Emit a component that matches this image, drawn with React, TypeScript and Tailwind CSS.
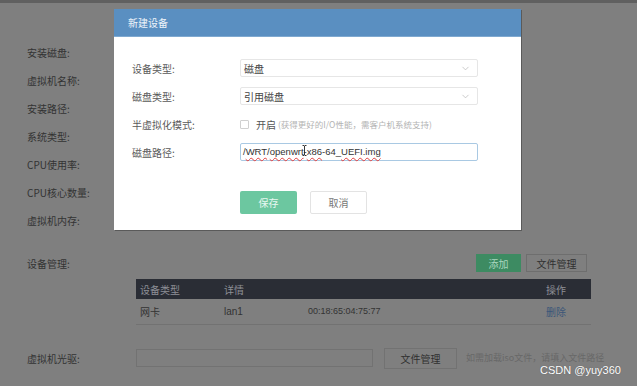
import React from 'react';
import { ChevronDown } from 'lucide-react';

const font = { fontFamily: '"Microsoft YaHei", "Noto Sans CJK SC", "Liberation Sans", sans-serif' };

const BgLabels = ['安装磁盘:', '虚拟机名称:', '安装路径:', '系统类型:', 'CPU使用率:', 'CPU核心数量:', '虚拟机内存:'];

const Select = ({ value }: { value: string }) => (
  <div className="flex h-[18px] w-[238px] items-center justify-between rounded-[2px] border border-[#e6e6e6] bg-white pl-[3px] pr-[6px]">
    <span className="text-[10px] text-[#444]">{value}</span>
    <ChevronDown className="h-[11px] w-[11px] text-[#b5b5b5]" strokeWidth={1.5} />
  </div>
);

const Squiggle = ({ children }: { children: React.ReactNode }) => (
  <span className="underline decoration-wavy decoration-[#e04040] decoration-[1px] underline-offset-[2px]">{children}</span>
);

// text cursor (I-beam) hovering over the path input
const IBeam = () => (
  <svg width="5" height="11" viewBox="0 0 5 11" className="absolute -left-[2px] -top-[7px]">
    <path d="M0.5 0.5h1.5l0.5 0.5 0.5-0.5h1.5M2.5 1v9M0.5 10.5h1.5l0.5-0.5 0.5 0.5h1.5" fill="none" stroke="#222" strokeWidth="0.9" />
  </svg>
);

const App = () => {
  return (
    <div className="relative h-[386px] w-full overflow-hidden bg-[#7f7f7f]" style={font}>
      <div className="h-[3px] bg-[#606060]" />

      {/* Background form (dimmed) */}
      <div className="pt-[35px]">
        {BgLabels.map((label) => (
          <div key={label} className="flex h-[28px] items-center pl-[27px] text-[10px] text-[#333]">
            {label}
          </div>
        ))}

        <div className="mt-[15px] flex h-[28px] items-center">
          <div className="w-[136px] pl-[27px] text-[10px] text-[#333]">设备管理:</div>
          <div className="flex w-[455px] justify-end gap-[5px] pr-[4px]">
            <div className="flex h-[18px] w-[45px] items-center justify-center bg-[#3d8b62] text-[10px] text-[#a9d6bf]">添加</div>
            <div className="flex h-[18px] w-[61px] items-center justify-center border border-[#6e6e6e] text-[10px] text-[#303030]">文件管理</div>
          </div>
        </div>

        <div className="ml-[136px] mt-[2px] w-[455px]">
          <div className="flex h-[20px] items-center bg-[#2a2d35] text-[10px] text-[#8d8f95]">
            <div className="w-[88px] pl-[4px]">设备类型</div>
            <div className="w-[322px]">详情</div>
            <div>操作</div>
          </div>
          <div className="flex h-[26px] items-center border-b border-[#727272] text-[10px] text-[#333]">
            <div className="w-[88px] pl-[4px]">网卡</div>
            <div className="w-[84px]" style={{ fontFamily: '"Liberation Sans", sans-serif' }}>lan1</div>
            <div className="w-[238px] text-[9px]" style={{ fontFamily: '"Liberation Sans", sans-serif' }}>00:18:65:04:75:77</div>
            <div className="text-[#3b5679]">删除</div>
          </div>
        </div>

        <div className="mt-[19px] flex h-[28px] items-center">
          <div className="w-[136px] pl-[27px] text-[10px] text-[#333]">虚拟机光驱:</div>
          <div className="h-[18px] w-[237px] border border-[#727272]" />
          <div className="ml-[11px] flex h-[21px] w-[73px] items-center justify-center border border-[#727272] text-[10px] text-[#303030]">文件管理</div>
          <div className="ml-[9px] text-[9px] text-[#686868]">如需加载iso文件，请填入文件路径</div>
        </div>
      </div>

      {/* Modal */}
      <div className="absolute left-[114px] top-[9px] h-[221px] w-[407px] bg-white shadow-[1px_1px_0_#5a5a5a]">
        <div className="flex h-[28px] items-center border-b border-[#7fa9d0] bg-[#5a8fc1] pl-[14px] text-[10px] text-[#eef4fa]">
          新建设备
        </div>
        <div className="pt-[22px]">
          <div className="flex h-[18px] items-center">
            <div className="w-[126px] pl-[18px] text-[10px] text-[#5a5a5a]">设备类型:</div>
            <Select value="磁盘" />
          </div>
          <div className="mt-[10px] flex h-[18px] items-center">
            <div className="w-[126px] pl-[18px] text-[10px] text-[#5a5a5a]">磁盘类型:</div>
            <Select value="引用磁盘" />
          </div>
          <div className="mt-[10px] flex h-[18px] items-center">
            <div className="w-[126px] pl-[18px] text-[10px] text-[#5a5a5a]">半虚拟化模式:</div>
            <div className="h-[9px] w-[9px] rounded-[1px] border border-[#d0d0d0]" />
            <span className="ml-[7px] text-[10px] text-[#555]">开启</span>
            <span className="ml-[2px] text-[8.5px] text-[#b3b3b3]">(获得更好的I/O性能，需客户机系统支持)</span>
          </div>
          <div className="mt-[10px] flex h-[18px] items-center">
            <div className="w-[126px] pl-[18px] text-[10px] text-[#5a5a5a]">磁盘路径:</div>
            <div className="flex h-[18px] w-[238px] items-center rounded-[2px] border border-[#a9c9e3] pl-[2px] text-[9.5px] text-[#333]" style={{ fontFamily: '"Liberation Sans", sans-serif' }}>
              /<Squiggle>WRT</Squiggle>/<Squiggle>openwrt</Squiggle>
              <span className="relative">
                <IBeam />
              </span>
              -<Squiggle>x86</Squiggle>-64_<Squiggle>UEFI.img</Squiggle>
            </div>
          </div>
          <div className="ml-[126px] mt-[30px] flex gap-[13px]">
            <button className="h-[23px] w-[57px] rounded-[2px] bg-[#6cc7a0] text-[10px] text-[#e8f7f0]" style={font}>保存</button>
            <button className="h-[23px] w-[57px] rounded-[2px] border border-[#e3e3e3] bg-white text-[10px] text-[#777]" style={font}>取消</button>
          </div>
        </div>
      </div>

      {/* watermark */}
      <div className="absolute left-[540px] top-[362px] text-[11px] text-white [text-shadow:0_0_1px_#555]" style={{ fontFamily: '"Liberation Sans", sans-serif' }}>
        CSDN @yuy360
      </div>
    </div>
  );
};

export default App;
